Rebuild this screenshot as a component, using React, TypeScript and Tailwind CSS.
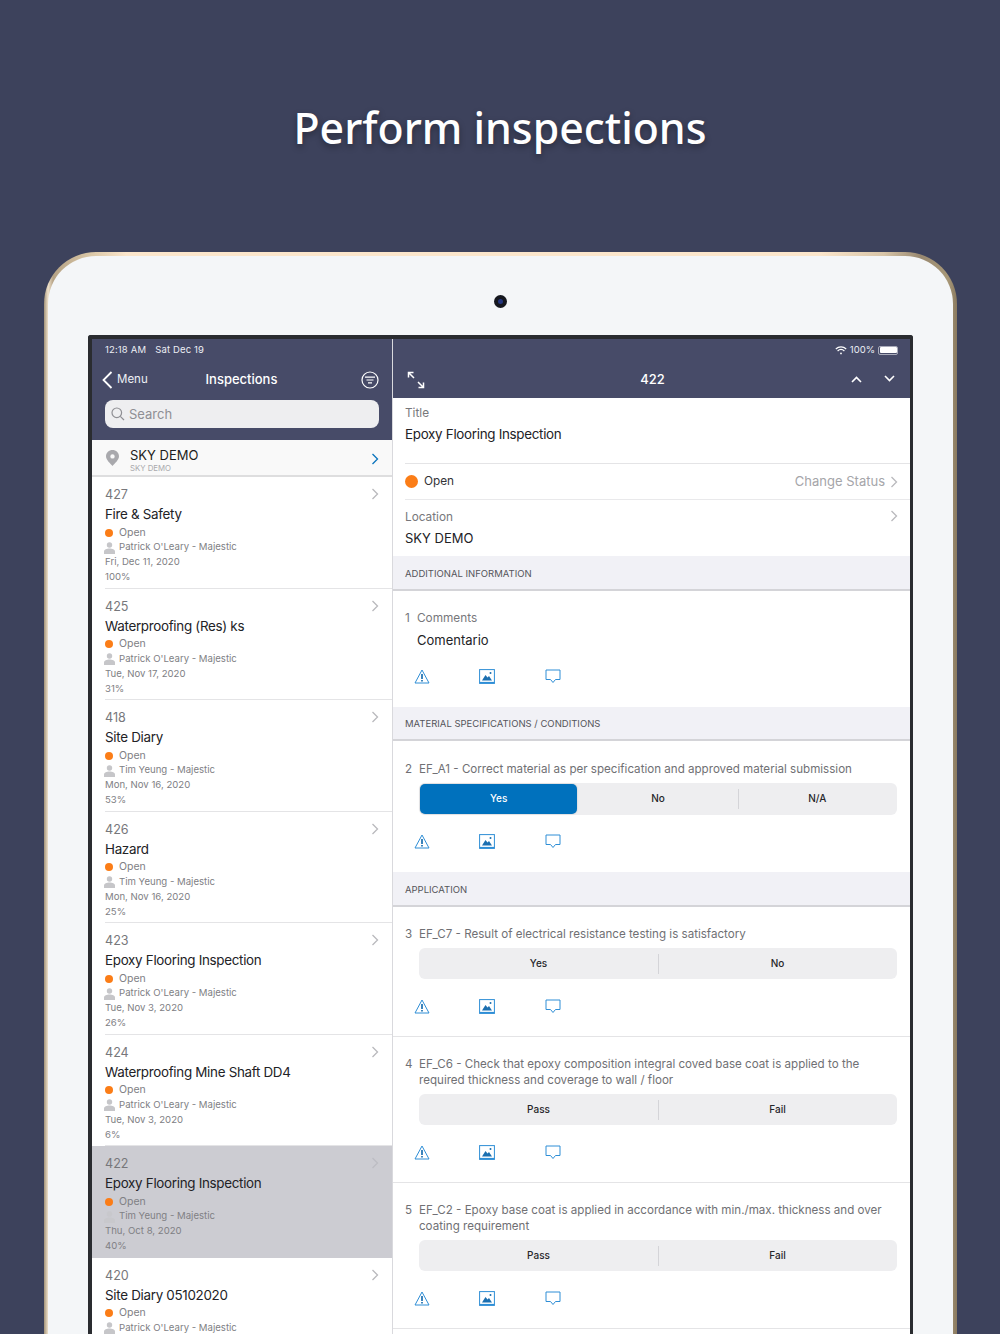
import React from "react";

const rows = [
  ["427", "Fire & Safety", "Patrick O'Leary - Majestic", "Fri, Dec 11, 2020", "100%"],
  ["425", "Waterproofing (Res) ks", "Patrick O'Leary - Majestic", "Tue, Nov 17, 2020", "31%"],
  ["418", "Site Diary", "Tim Yeung - Majestic", "Mon, Nov 16, 2020", "53%"],
  ["426", "Hazard", "Tim Yeung - Majestic", "Mon, Nov 16, 2020", "25%"],
  ["423", "Epoxy Flooring Inspection", "Patrick O'Leary - Majestic", "Tue, Nov 3, 2020", "26%"],
  ["424", "Waterproofing Mine Shaft DD4", "Patrick O'Leary - Majestic", "Tue, Nov 3, 2020", "6%"],
  ["422", "Epoxy Flooring Inspection", "Tim Yeung - Majestic", "Thu, Oct 8, 2020", "40%"],
  ["420", "Site Diary 05102020", "Patrick O'Leary - Majestic", "", ""],
];

function Chevron({ color = "#b9b9bd", w = 8, h = 12 }: { color?: string; w?: number; h?: number }) {
  return (
    <svg width={w} height={h} viewBox="0 0 8 12" fill="none">
      <path d="M1.5 1 L6.5 6 L1.5 11" stroke={color} strokeWidth="1.3" />
    </svg>
  );
}

function Person({ faded }: { faded?: boolean }) {
  return (
    <svg className="-ml-[1px]" width="11" height="12" viewBox="0 0 11 12" fill={faded ? "#c8c8cc" : "#c6c6c9"}>
      <circle cx="5.5" cy="3" r="2.7" />
      <path d="M0 12 V9.6 C0 7.6 2.6 6.6 5.5 6.6 C8.4 6.6 11 7.6 11 9.6 V12 Z" />
    </svg>
  );
}

function Row({ r, selected }: { r: string[]; selected: boolean }) {
  return (
    <div className={selected ? "h-[111.5px] shrink-0 bg-[#ccccd2] pl-[13px]" : "h-[111.5px] shrink-0 bg-white pl-[13px]"}>
      <div className={selected ? "h-full" : "h-full border-b border-[#e4e4e6]"}>
        <div className="flex h-[27px] items-end justify-between pr-[13px] text-[12.6px] leading-[18px] text-[#77777b]">
          <span>{r[0]}</span>
          <span className="mb-[4px]"><Chevron color={selected ? "#bdbdc3" : "#b9b9bd"} /></span>
        </div>
        <div className="h-[20px] text-[13.4px] leading-[20px] tracking-[-0.3px] text-[#222226]">{r[1]}</div>
        <div className="flex h-[16px] items-center pt-px text-[10.5px] text-[#808084]">
          <span className="h-[8px] w-[8px] rounded-full bg-[#fb7d17]" />
          <span className="ml-[6px]">Open</span>
        </div>
        <div className="flex h-[15px] items-center text-[9.6px] text-[#808084]">
          <Person faded={selected} />
          <span className="ml-[4px]">{r[2]}</span>
        </div>
        <div className="flex h-[15px] items-center text-[9.6px] text-[#808084]">{r[3]}</div>
        <div className="flex h-[15px] items-center text-[9.6px] text-[#808084]">{r[4]}</div>
      </div>
    </div>
  );
}

function Section({ children }: { children: string }) {
  return (
    <div className="flex h-[34.5px] shrink-0 items-center border-b-2 border-[#d4d4d8] bg-[#f1f1f6] pl-[12px] pt-[3px] text-[9.5px] text-[#55555a]">
      {children}
    </div>
  );
}

function ActionIcons() {
  const c = "#2e8ed6";
  return (
    <div className="flex h-[22px] items-center pl-[22px]">
      <svg className="-ml-[1px]" width="16" height="15" viewBox="0 0 16 15" fill="none">
        <path d="M8 1 L15 14 H1 Z" stroke={c} strokeWidth="1" />
        <path d="M8 5 V10 M8 11 V12.6" stroke="#1b6fb0" strokeWidth="1.7" />
      </svg>
      <svg className="ml-[49px]" width="16" height="15" viewBox="0 0 16 15" fill="none">
        <rect x="0.6" y="0.6" width="14.8" height="13.8" stroke={c} strokeWidth="1" />
        <path d="M0.6 13.6 H15.4" stroke={c} strokeWidth="1.4" />
        <path d="M3 11.5 L6.5 6 L8.5 8.5 L10 7 L13 11.5 Z" fill="#1b6fb0" />
        <circle cx="11.5" cy="4" r="1" fill="#1b6fb0" />
      </svg>
      <svg className="ml-[50px]" width="16" height="15" viewBox="0 0 16 15" fill="none">
        <path d="M1 1 H15 V10.5 H10.5 L8 13.5 L5.5 10.5 H1 Z" stroke={c} strokeWidth="1" strokeLinejoin="round" />
      </svg>
    </div>
  );
}

function Segments({ items, active }: { items: string[]; active?: number }) {
  return (
    <div className="ml-[26px] mr-[13px] flex h-[31.5px] items-stretch rounded-[6px] bg-[#eeeef0] text-[10px] font-medium text-[#26262a]">
      {items.map((t, i) => (
        <div key={t} className="relative flex flex-1 items-center justify-center">
          {i === active ? (
            <div className="m-[1px] flex h-[calc(100%-2px)] w-full items-center justify-center rounded-[5px] bg-[#0071bd] text-white shadow-[0_0_2px_rgba(0,0,0,0.2)]">{t}</div>
          ) : (
            <>
              {i > 0 && i !== (active ?? -9) + 1 && <span className="absolute left-0 top-[6px] h-[20px] w-px bg-[#d4d4d8]" />}
              {t}
            </>
          )}
        </div>
      ))}
    </div>
  );
}

function Question({ n, lines, items, active, last }: { n: string; lines: string[]; items: string[]; active?: number; last?: boolean }) {
  return (
    <div className={last ? "h-[131px] shrink-0 pt-[20px]" : "shrink-0 border-b border-[#e4e4e6] pt-[19px]"}>
      <div className="flex pl-[12px] text-[11.6px] leading-[16px] text-[#707074]">
        <span className="w-[14px] shrink-0">{n}</span>
        <div>
          {lines.map((l) => (
            <div key={l}>{l}</div>
          ))}
        </div>
      </div>
      <div className="mt-[6px]">
        <Segments items={items} active={active} />
      </div>
      <div className="mt-[16px] pb-[18.5px]">
        <ActionIcons />
      </div>
    </div>
  );
}

export default function App() {
  return (
    <div className="flex h-[1334px] w-[1000px] flex-col overflow-hidden bg-[#3d425c] font-['Inter','Liberation_Sans',sans-serif]">
      <div className="flex h-[252px] shrink-0 justify-center pt-[98px]">
        <h1 className="h-[60px] font-['Noto_Sans',sans-serif] text-[42.8px] font-medium leading-[60px] text-white [text-shadow:0_3px_6px_rgba(0,0,0,0.35)]">
          Perform inspections
        </h1>
      </div>

      <div className="ml-[44px] w-[913px] flex-1 rounded-t-[52px] bg-[linear-gradient(90deg,#a3937a_0%,#f0e2cc_0.45%,#b5a285_1%,#d9c6a6_5%,#fbe6cc_9%,#fbe6cc_85%,#d8c5a8_92%,#988870_96%,#a89878_99%,#8a7a60_100%)] px-[4px] pt-[4px]">
        <div className="flex h-full flex-col rounded-t-[48px] bg-[#f4f6f8] px-[40px]">
          <div className="flex h-[79px] shrink-0 items-center justify-center pt-[11px]">
            <div className="flex h-[13px] w-[13px] items-center justify-center rounded-full bg-[#15171e]">
              <span className="h-[5px] w-[5px] rounded-full bg-[#24357e]" />
            </div>
          </div>

          <div className="flex flex-1 flex-col overflow-hidden rounded-t-[3px] border-b-0 border-l-[4px] border-r-[3px] border-t-[4px] border-[#2a2c30] bg-white">
            <div className="flex flex-1">
              {/* Left column */}
              <div className="flex w-[301px] shrink-0 flex-col border-r border-[#d9d9dd]">
                <div className="h-[101px] shrink-0 bg-[#474b68] pl-[13px] pr-[13px]">
                  <div className="flex h-[21px] items-center gap-[9px] pt-px text-[9.5px] tracking-[0.15px] text-[#eceef4]">
                    <span>12:18 AM</span>
                    <span>Sat Dec 19</span>
                  </div>
                  <div className="flex h-[37px] items-center justify-between pt-[2px]">
                    <div className="flex w-[80px] items-center text-[11.5px] text-[#eef0f5]">
                      <svg className="-ml-[3px]" width="11" height="18" viewBox="0 0 11 18" fill="none">
                        <path d="M9.5 1 L1.5 9 L9.5 17" stroke="white" strokeWidth="1.8" />
                      </svg>
                      <span className="ml-[4px] mt-px">Menu</span>
                    </div>
                    <span className="-ml-px text-[13px] font-medium text-white">Inspections</span>
                    <div className="flex w-[80px] justify-end">
                      <svg width="18" height="18" viewBox="0 0 18 18" fill="none" stroke="white">
                        <circle cx="9" cy="9" r="8" strokeWidth="1.2" />
                        <path d="M4 6.2 H14 M5.5 9 H12.5 M7 11.8 H11" strokeWidth="1.2" />
                      </svg>
                    </div>
                  </div>
                  <div className="mt-[3px] flex h-[28px] items-center rounded-[8px] bg-[#eeeef0] pl-[6px] text-[13px] text-[#8f8f94]">
                    <svg width="14" height="14" viewBox="0 0 14 14" fill="none" stroke="#8f8f94" strokeWidth="1.2">
                      <circle cx="5.8" cy="5.8" r="4.8" />
                      <path d="M9.3 9.3 L13 13" />
                    </svg>
                    <span className="ml-[4px] mt-px">Search</span>
                  </div>
                </div>

                <div className="flex h-[37px] shrink-0 items-center border-b-2 border-[#dededf] bg-[#f9f9f9] pl-[14px] pr-[13px]">
                  <svg width="13" height="16" viewBox="0 0 13 16">
                    <path fillRule="evenodd" fill="#a9a9ad" d="M6.5 0 C10 0 13 2.7 13 6.2 C13 10 8.5 13.5 6.5 16 C4.5 13.5 0 10 0 6.2 C0 2.7 3 0 6.5 0 Z M6.5 4.2 A2.2 2.2 0 1 0 6.5 8.6 A2.2 2.2 0 1 0 6.5 4.2 Z" />
                  </svg>
                  <div className="ml-[11px] mt-[5px] flex-1">
                    <div className="text-[13px] leading-[15px] text-[#1d1d20]">SKY DEMO</div>
                    <div className="text-[7.8px] leading-[10px] text-[#a9a9ad]">SKY DEMO</div>
                  </div>
                  <span className="mt-[2px]"><Chevron color="#0a74bd" /></span>
                </div>

                {rows.map((r) => (
                  <Row key={r[0]} r={r} selected={r[0] === "422"} />
                ))}
              </div>

              {/* Right column */}
              <div className="flex min-w-0 flex-1 flex-col">
                <div className="h-[59px] shrink-0 bg-[#474b68] pl-[14px] pr-[12px]">
                  <div className="flex h-[21px] items-center justify-end pt-px text-[9.5px] text-[#eceef4]">
                    <svg width="12" height="9" viewBox="0 0 12 9" fill="none" stroke="white" strokeWidth="1.2">
                      <path d="M0.8 3 C3.8 0.2 8.2 0.2 11.2 3 M2.6 5 C4.6 3.2 7.4 3.2 9.4 5" />
                      <circle cx="6" cy="7.4" r="0.9" fill="white" stroke="none" />
                    </svg>
                    <span className="ml-[3px]">100%</span>
                    <div className="ml-[3px] flex h-[9px] w-[20px] rounded-[2px] border border-[#a9abba] p-[0.5px]">
                      <span className="h-full w-full rounded-[1px] bg-white" />
                    </div>
                  </div>
                  <div className="flex h-[37px] items-center justify-between pt-[2px]">
                    <div className="w-[90px]">
                      <svg width="18" height="18" viewBox="0 0 18 18" fill="none" stroke="white" strokeWidth="1.5">
                        <path d="M1.5 6.5 V1.5 H6.5 M1.5 1.5 L7 7 M16.5 11.5 V16.5 H11.5 M16.5 16.5 L11 11" />
                      </svg>
                    </div>
                    <span className="text-[13px] font-medium text-white">422</span>
                    <div className="flex w-[90px] items-center justify-end gap-[22px] pr-[3px]">
                      <svg width="11" height="7" viewBox="0 0 11 7" fill="none" stroke="white" strokeWidth="1.6">
                        <path d="M1 6 L5.5 1.5 L10 6" />
                      </svg>
                      <svg className="-mt-[2px]" width="11" height="7" viewBox="0 0 11 7" fill="none" stroke="white" strokeWidth="1.6">
                        <path d="M1 1 L5.5 5.5 L10 1" />
                      </svg>
                    </div>
                  </div>
                </div>

                <div className="flex h-[66px] shrink-0 flex-col pl-[12px]">
                  <div className="h-full border-b border-[#e4e4e6]">
                    <div className="pt-[7px] text-[11.8px] leading-[16px] text-[#77777b]">Title</div>
                    <div className="mt-[3px] text-[13.4px] leading-[20px] tracking-[-0.3px] text-[#222226]">Epoxy Flooring Inspection</div>
                  </div>
                </div>
                <div className="flex h-[36px] shrink-0 pl-[12px]">
                  <div className="flex h-full flex-1 items-center border-b border-[#e9e9eb] pr-[12px]">
                    <span className="h-[13px] w-[13px] rounded-full bg-[#fb7d17]" />
                    <span className="ml-[6px] text-[11.8px] text-[#333337]">Open</span>
                    <span className="ml-auto text-[13px] text-[#a5a5a9]">Change Status</span>
                    <span className="ml-[5px] flex"><Chevron /></span>
                  </div>
                </div>
                <div className="h-[56px] shrink-0 pl-[12px] pr-[12px]">
                  <div className="flex justify-between pt-[9px] text-[11.8px] leading-[16px] text-[#77777b]">
                    <span>Location</span>
                    <span className="mt-[1px]"><Chevron /></span>
                  </div>
                  <div className="mt-[3px] text-[13px] leading-[20px] text-[#222226]">SKY DEMO</div>
                </div>

                <Section>ADDITIONAL INFORMATION</Section>
                <div className="h-[116px] shrink-0">
                  <div className="flex pl-[12px] pt-[19px] text-[11.8px] leading-[16px] text-[#77777b]">
                    <span className="w-[12px]">1</span>
                    <span>Comments</span>
                  </div>
                  <div className="mt-[4px] pl-[24px] text-[13px] leading-[20px] text-[#222226]">Comentario</div>
                  <div className="mt-[16px]"><ActionIcons /></div>
                </div>

                <Section>MATERIAL SPECIFICATIONS / CONDITIONS</Section>
                <Question n="2" lines={["EF_A1 - Correct material as per specification and approved material submission"]} items={["Yes", "No", "N/A"]} active={0} last />
                <Section>APPLICATION</Section>
                <Question n="3" lines={["EF_C7 - Result of electrical resistance testing is satisfactory"]} items={["Yes", "No"]} />
                <Question n="4" lines={["EF_C6 - Check that epoxy composition integral coved base coat is applied to the", "required thickness and coverage to wall / floor"]} items={["Pass", "Fail"]} />
                <Question n="5" lines={["EF_C2 - Epoxy base coat is applied in accordance with min./max. thickness and over", "coating requirement"]} items={["Pass", "Fail"]} />
              </div>
            </div>
          </div>
        </div>
      </div>
    </div>
  );
}
